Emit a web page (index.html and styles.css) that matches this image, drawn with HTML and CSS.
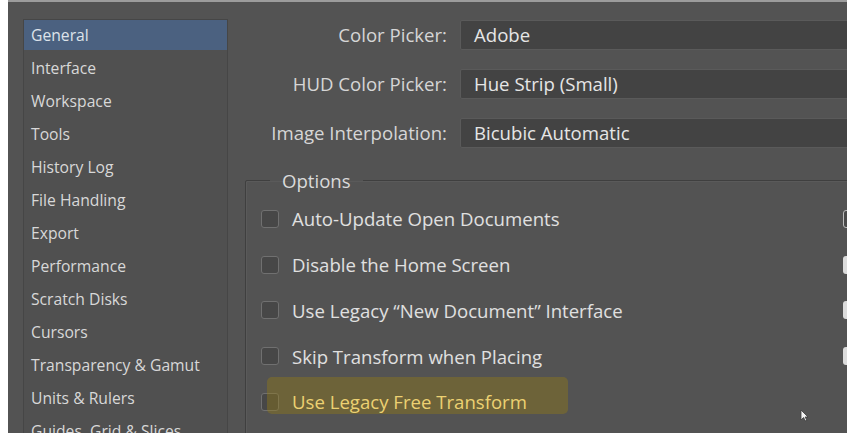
FILE: index.html
```html
<!DOCTYPE html>
<html>
<head>
<meta charset="utf-8">
<link rel="stylesheet" href="styles.css">
</head>
<body>
<div class="window">
  <ul class="sidebar">
    <li class="item selected">General</li>
    <li class="item">Interface</li>
    <li class="item">Workspace</li>
    <li class="item">Tools</li>
    <li class="item">History Log</li>
    <li class="item">File Handling</li>
    <li class="item">Export</li>
    <li class="item">Performance</li>
    <li class="item">Scratch Disks</li>
    <li class="item">Cursors</li>
    <li class="item">Transparency &amp; Gamut</li>
    <li class="item">Units &amp; Rulers</li>
    <li class="item">Guides, Grid &amp; Slices</li>
  </ul>
  <div class="main">
    <div class="fields">
      <label class="label">Color Picker:</label>
      <div class="select">Adobe</div>
      <label class="label">HUD Color Picker:</label>
      <div class="select">Hue Strip (Small)</div>
      <label class="label">Image Interpolation:</label>
      <div class="select">Bicubic Automatic</div>
    </div>
    <fieldset class="options">
      <legend class="legend">Options</legend>
      <div class="row">
        <div class="opt"><span class="box"></span><span class="text">Auto-Update Open Documents</span></div>
        <span class="box2 outline"></span>
      </div>
      <div class="row">
        <div class="opt"><span class="box"></span><span class="text">Disable the Home Screen</span></div>
        <span class="box2"></span>
      </div>
      <div class="row">
        <div class="opt"><span class="box"></span><span class="text">Use Legacy “New Document” Interface</span></div>
        <span class="box2"></span>
      </div>
      <div class="row">
        <div class="opt"><span class="box"></span><span class="text">Skip Transform when Placing</span></div>
        <span class="box2"></span>
      </div>
      <div class="row">
        <div class="opt highlight"><span class="box"></span><span class="text">Use Legacy Free Transform</span></div>
        <svg class="cursor" width="9" height="13" viewBox="0 0 9 13"><path d="M1 1 L1 11 L3.5 8.5 L5.5 12 L7 11.3 L5 8 L8 8 Z" fill="#f2f2f2" stroke="#3a3a3a" stroke-width="0.8"/></svg>
      </div>
    </fieldset>
  </div>
</div>
</body>
</html>
```

FILE: styles.css
```css
html, body {
  margin: 0;
  padding: 0;
  background: #ffffff;
  overflow: hidden;
  height: 433px;
}

.window {
  margin-left: 8px;
  height: 431px;
  background: #535353;
  border-top: 2px solid #9c9c9c;
  display: flex;
  overflow: hidden;
  font-family: "Open Sans", "Noto Sans", sans-serif;
  color: #d9d9d9;
}

.sidebar {
  list-style: none;
  margin: 17px 0 0 15px;
  padding: 0;
  width: 203px;
  flex: none;
  background: #505050;
  border: 1px solid #464646;
  border-bottom: none;
  font-size: 15.7px;
}

.item {
  height: 33px;
  line-height: 33px;
  padding-left: 7px;
  white-space: nowrap;
  color: #d8d8d8;
}

.item.selected {
  height: 30px;
  line-height: 30px;
  margin-bottom: 2px;
  background: #4b6180;
  color: #dde3ea;
}

.main {
  flex: 1;
  min-width: 0;
  padding-left: 17px;
  font-size: 18.6px;
}

.fields {
  display: grid;
  grid-template-columns: 202px 1000px;
  column-gap: 13px;
  row-gap: 19px;
  margin-top: 18px;
}

.label {
  text-align: right;
  line-height: 30px;
  color: #d6d6d6;
  white-space: nowrap;
}

.select {
  height: 28px;
  line-height: 28px;
  background: #434343;
  border: 1px solid #5a5a5a;
  border-radius: 2px;
  padding-left: 13px;
  color: #e6e6e6;
}

.options {
  margin: 20px 0 0 0;
  padding: 3px 0 0 15px;
  width: 1000px;
  height: 400px;
  border: 1px solid #3f3f3f;
  border-radius: 2px;
  box-shadow: inset 1px 1px 0 #5a5a5a;
}

.legend {
  margin-left: 9px;
  padding: 0 12px 0 12px;
  color: #dadada;
  font-size: 18.6px;
}

.row {
  display: grid;
  grid-template-columns: 582px auto;
  align-items: center;
  height: 45.75px;
}

.opt {
  display: flex;
  align-items: center;
  gap: 13px;
  white-space: nowrap;
}

.box {
  width: 18px;
  height: 18px;
  border: 1px solid #707070;
  border-radius: 3px;
  background: #474747;
  box-sizing: border-box;
  flex: none;
}

.text {
  color: #e0e0e0;
}

.box2 {
  width: 18px;
  height: 18px;
  border-radius: 3px;
  background: #dcdcdc;
}

.box2.outline {
  background: #4a4a4a;
  border: 1px solid #bdbdbd;
  box-sizing: border-box;
}

.highlight {
  position: relative;
}

.highlight .box {
  background: #474747;
}

.highlight::after {
  content: "";
  position: absolute;
  left: 6px;
  top: -12px;
  width: 301px;
  height: 37px;
  border-radius: 5px;
  background: rgba(150, 125, 20, 0.4);
}

.highlight .text {
  color: #ecd172;
  position: relative;
  z-index: 1;
}

.cursor {
  margin-left: -43px;
  margin-top: 27px;
}
```
